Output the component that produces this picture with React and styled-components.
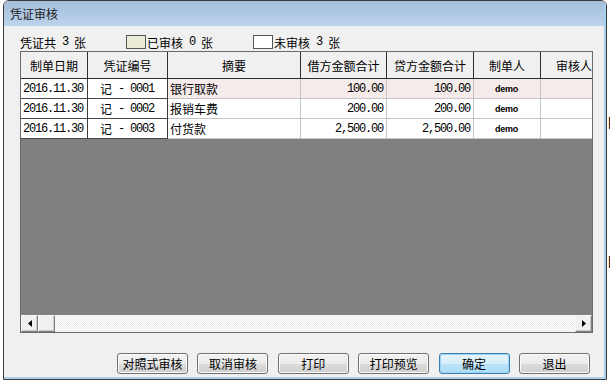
import React from 'react';
import styled, { createGlobalStyle } from 'styled-components';

const GlobalStyle = createGlobalStyle`
    html, body {
        margin: 0;
        padding: 0;
        background: #ffffff;
    }
    body {
        font-family: "Noto Sans CJK SC", "Liberation Sans", sans-serif;
        font-size: 12px;
        color: #000;
    }
`

const columns = [
    { w: 67, title: '制单日期' },
    { w: 80, title: '凭证编号' },
    { w: 133, title: '摘要' },
    { w: 86, title: '借方金额合计' },
    { w: 87, title: '贷方金额合计' },
    { w: 67, title: '制单人' },
    { w: 67, title: '审核人' },
]

const vouchers = [
    { date: '2016.11.30', no: '0001', memo: '银行取款', debit: '100.00', credit: '100.00', maker: 'demo', checked: true },
    { date: '2016.11.30', no: '0002', memo: '报销车费', debit: '200.00', credit: '200.00', maker: 'demo' },
    { date: '2016.11.30', no: '0003', memo: '付货款', debit: '2,500.00', credit: '2,500.00', maker: 'demo' },
]

const buttons = ['对照式审核', '取消审核', '打印', '打印预览', '确定', '退出']

export default function App() {
    return (
        <Page>
            <GlobalStyle />
            <Frame>
                <Inner>
                    <TitleBar>凭证审核</TitleBar>
                    <Client>
                        <Legend>
                            <LegendItem>凭证共<Num> 3 </Num>张</LegendItem>
                            <LegendItem>
                                <Swatch $color="#ecebd6" />已审核<Num> 0 </Num>张
                            </LegendItem>
                            <LegendItem>
                                <Swatch $color="#ffffff" />未审核<Num> 3 </Num>张
                            </LegendItem>
                        </Legend>
                        <Grid>
                            <Rows>
                                <HeaderRow>
                                    {columns.map((c, i) => (
                                        <HeaderCell key={i} $w={c.w}>{c.title}</HeaderCell>
                                    ))}
                                </HeaderRow>
                                {vouchers.map((v, i) => (
                                    <Row key={i}>
                                        <Cell $w={67} $fixed $align="left"><Num>{v.date}</Num></Cell>
                                        <Cell $w={80} $fixed $align="center">记<Num> - {v.no}</Num></Cell>
                                        <Cell $w={133} $pink={v.checked} $align="left">{v.memo}</Cell>
                                        <Cell $w={86} $pink={v.checked} $align="right"><Num>{v.debit}</Num></Cell>
                                        <Cell $w={87} $pink={v.checked} $align="right"><Num>{v.credit}</Num></Cell>
                                        <Cell $w={67} $pink={v.checked} $align="center"><Small>{v.maker}</Small></Cell>
                                        <Cell $w={67} $pink={v.checked} />
                                    </Row>
                                ))}
                            </Rows>
                            <EmptyArea />
                            <HScroll>
                                <ScrollButton>
                                    <svg width="4" height="7" viewBox="0 0 4 7"><path d="M4 0 L0 3.5 L4 7 Z" fill="#000" /></svg>
                                </ScrollButton>
                                <ScrollButton />
                                <Track />
                                <ScrollButton>
                                    <svg width="4" height="7" viewBox="0 0 4 7"><path d="M0 0 L4 3.5 L0 7 Z" fill="#000" /></svg>
                                </ScrollButton>
                            </HScroll>
                        </Grid>
                        <ButtonBar>
                            {buttons.map((b, i) => (
                                <Button key={i} $default={b === '确定'}>{b}</Button>
                            ))}
                        </ButtonBar>
                    </Client>
                </Inner>
            </Frame>
            <Behind>
                <span>目</span>
                <span>目</span>
            </Behind>
        </Page>
    )
}

const Page = styled.div`
    display: flex;
    width: 610px;
    height: 382px;
    overflow: hidden;
    background: #ffffff;
`

const Frame = styled.div`
    margin-left: 3px;
    width: 604px;
    height: 380px;
    box-sizing: border-box;
    border: 1px solid #3a3a3a;
    border-radius: 6px 6px 0 0;
    overflow: hidden;
    flex-shrink: 0;
`

const Inner = styled.div`
    display: flex;
    flex-direction: column;
    height: 100%;
    box-sizing: border-box;
    border-right: 2px solid #a9d0ef;
    border-bottom: 2px solid #a9d0ef;
`

const TitleBar = styled.div`
    height: 25px;
    line-height: 25px;
    padding-left: 6px;
    background: linear-gradient(#a3bddb, #bcd3ec);
    color: #1b1b1b;
    font-size: 12px;
`

const Client = styled.div`
    flex: 1;
    display: flex;
    flex-direction: column;
    background: #f0f0f0;
    padding: 8px 0 0 16px;
`

const Legend = styled.div`
    display: flex;
    align-items: center;
    height: 16px;
`

const LegendItem = styled.div`
    display: flex;
    align-items: center;
    height: 16px;
    margin-right: 40px;
    white-space: pre;
`

const Swatch = styled.span`
    width: 18px;
    height: 12px;
    border: 1px solid #555;
    background: ${p => p.$color};
    margin-right: 1px;
`

const Num = styled.span`
    font-family: "Liberation Mono", monospace;
    font-size: 12px;
    letter-spacing: -1.2px;
    white-space: pre;
`

const Small = styled.span`
    font-family: "Liberation Sans", sans-serif;
    font-weight: bold;
    font-size: 9px;
    letter-spacing: -0.3px;
`

const Grid = styled.div`
    margin-top: 1px;
    width: 573px;
    height: 282px;
    box-sizing: border-box;
    border: 1px solid #6a6a6a;
    display: flex;
    flex-direction: column;
    background: #808080;
    overflow: hidden;
`

const Rows = styled.div`
    display: flex;
    flex-direction: column;
    overflow: hidden;
`

const HeaderRow = styled.div`
    display: flex;
    flex-shrink: 0;
`

const HeaderCell = styled.div`
    flex: 0 0 ${p => p.$w}px;
    height: 27px;
    box-sizing: border-box;
    border-right: 1px solid #2e2e2e;
    border-bottom: 1px solid #2e2e2e;
    background: #f0f0f0;
    display: flex;
    align-items: center;
    justify-content: center;
    white-space: nowrap;
    font-size: 12px;
`

const Row = styled.div`
    display: flex;
    flex-shrink: 0;
`

const Cell = styled.div`
    flex: 0 0 ${p => p.$w}px;
    height: 20px;
    box-sizing: border-box;
    border-right: 1px solid ${p => (p.$fixed ? '#3a3a3a' : '#c4c4c4')};
    border-bottom: 1px solid ${p => (p.$fixed ? '#4a4a4a' : '#c4c4c4')};
    background: ${p => (p.$pink ? '#f5ebeb' : '#ffffff')};
    display: flex;
    align-items: center;
    justify-content: ${p => (p.$align === 'right' ? 'flex-end' : p.$align === 'center' ? 'center' : 'flex-start')};
    padding: 0 3px 0 2px;
    white-space: pre;
    overflow: hidden;
`

const EmptyArea = styled.div`
    flex: 1;
    background: #808080;
`

const HScroll = styled.div`
    display: flex;
    height: 17px;
    flex-shrink: 0;
    background: repeating-conic-gradient(#ffffff 0 25%, #ececec 0 50%) 0 0 / 2px 2px;
`

const ScrollButton = styled.div`
    width: 17px;
    height: 17px;
    box-sizing: border-box;
    background: #f0f0f0;
    border-top: 1px solid #f8f8f8;
    border-left: 1px solid #f8f8f8;
    border-right: 1px solid #808080;
    border-bottom: 1px solid #808080;
    box-shadow: inset -1px -1px 0 #c8c8c8;
    display: flex;
    align-items: center;
    justify-content: center;
    flex-shrink: 0;
`

const Track = styled.div`
    flex: 1;
`

const ButtonBar = styled.div`
    display: flex;
    justify-content: space-between;
    margin: 20px 0 0 97px;
    width: 473px;
`

const Button = styled.div`
    width: 71px;
    height: 21px;
    box-sizing: border-box;
    border: 1px solid ${p => (p.$default ? '#3c7fb1' : '#707070')};
    border-radius: 3px;
    background: ${p => (p.$default
        ? 'linear-gradient(#e5f4fc 0%, #d6eefb 50%, #bde4f9 51%, #a9dbf6 100%)'
        : 'linear-gradient(#f2f2f2 0%, #ebebeb 50%, #dddddd 51%, #cfcfcf 100%)')};
    box-shadow: inset 0 0 0 1px ${p => (p.$default ? '#9fd3f4' : '#fbfbfb')};
    display: flex;
    align-items: center;
    justify-content: center;
    font-size: 12px;
    white-space: nowrap;
`

const Behind = styled.div`
    width: 3px;
    display: flex;
    flex-direction: column;
    padding-top: 113px;
    gap: 122px;
    font-size: 13px;
    line-height: 17px;
    overflow: hidden;
    white-space: nowrap;
`
